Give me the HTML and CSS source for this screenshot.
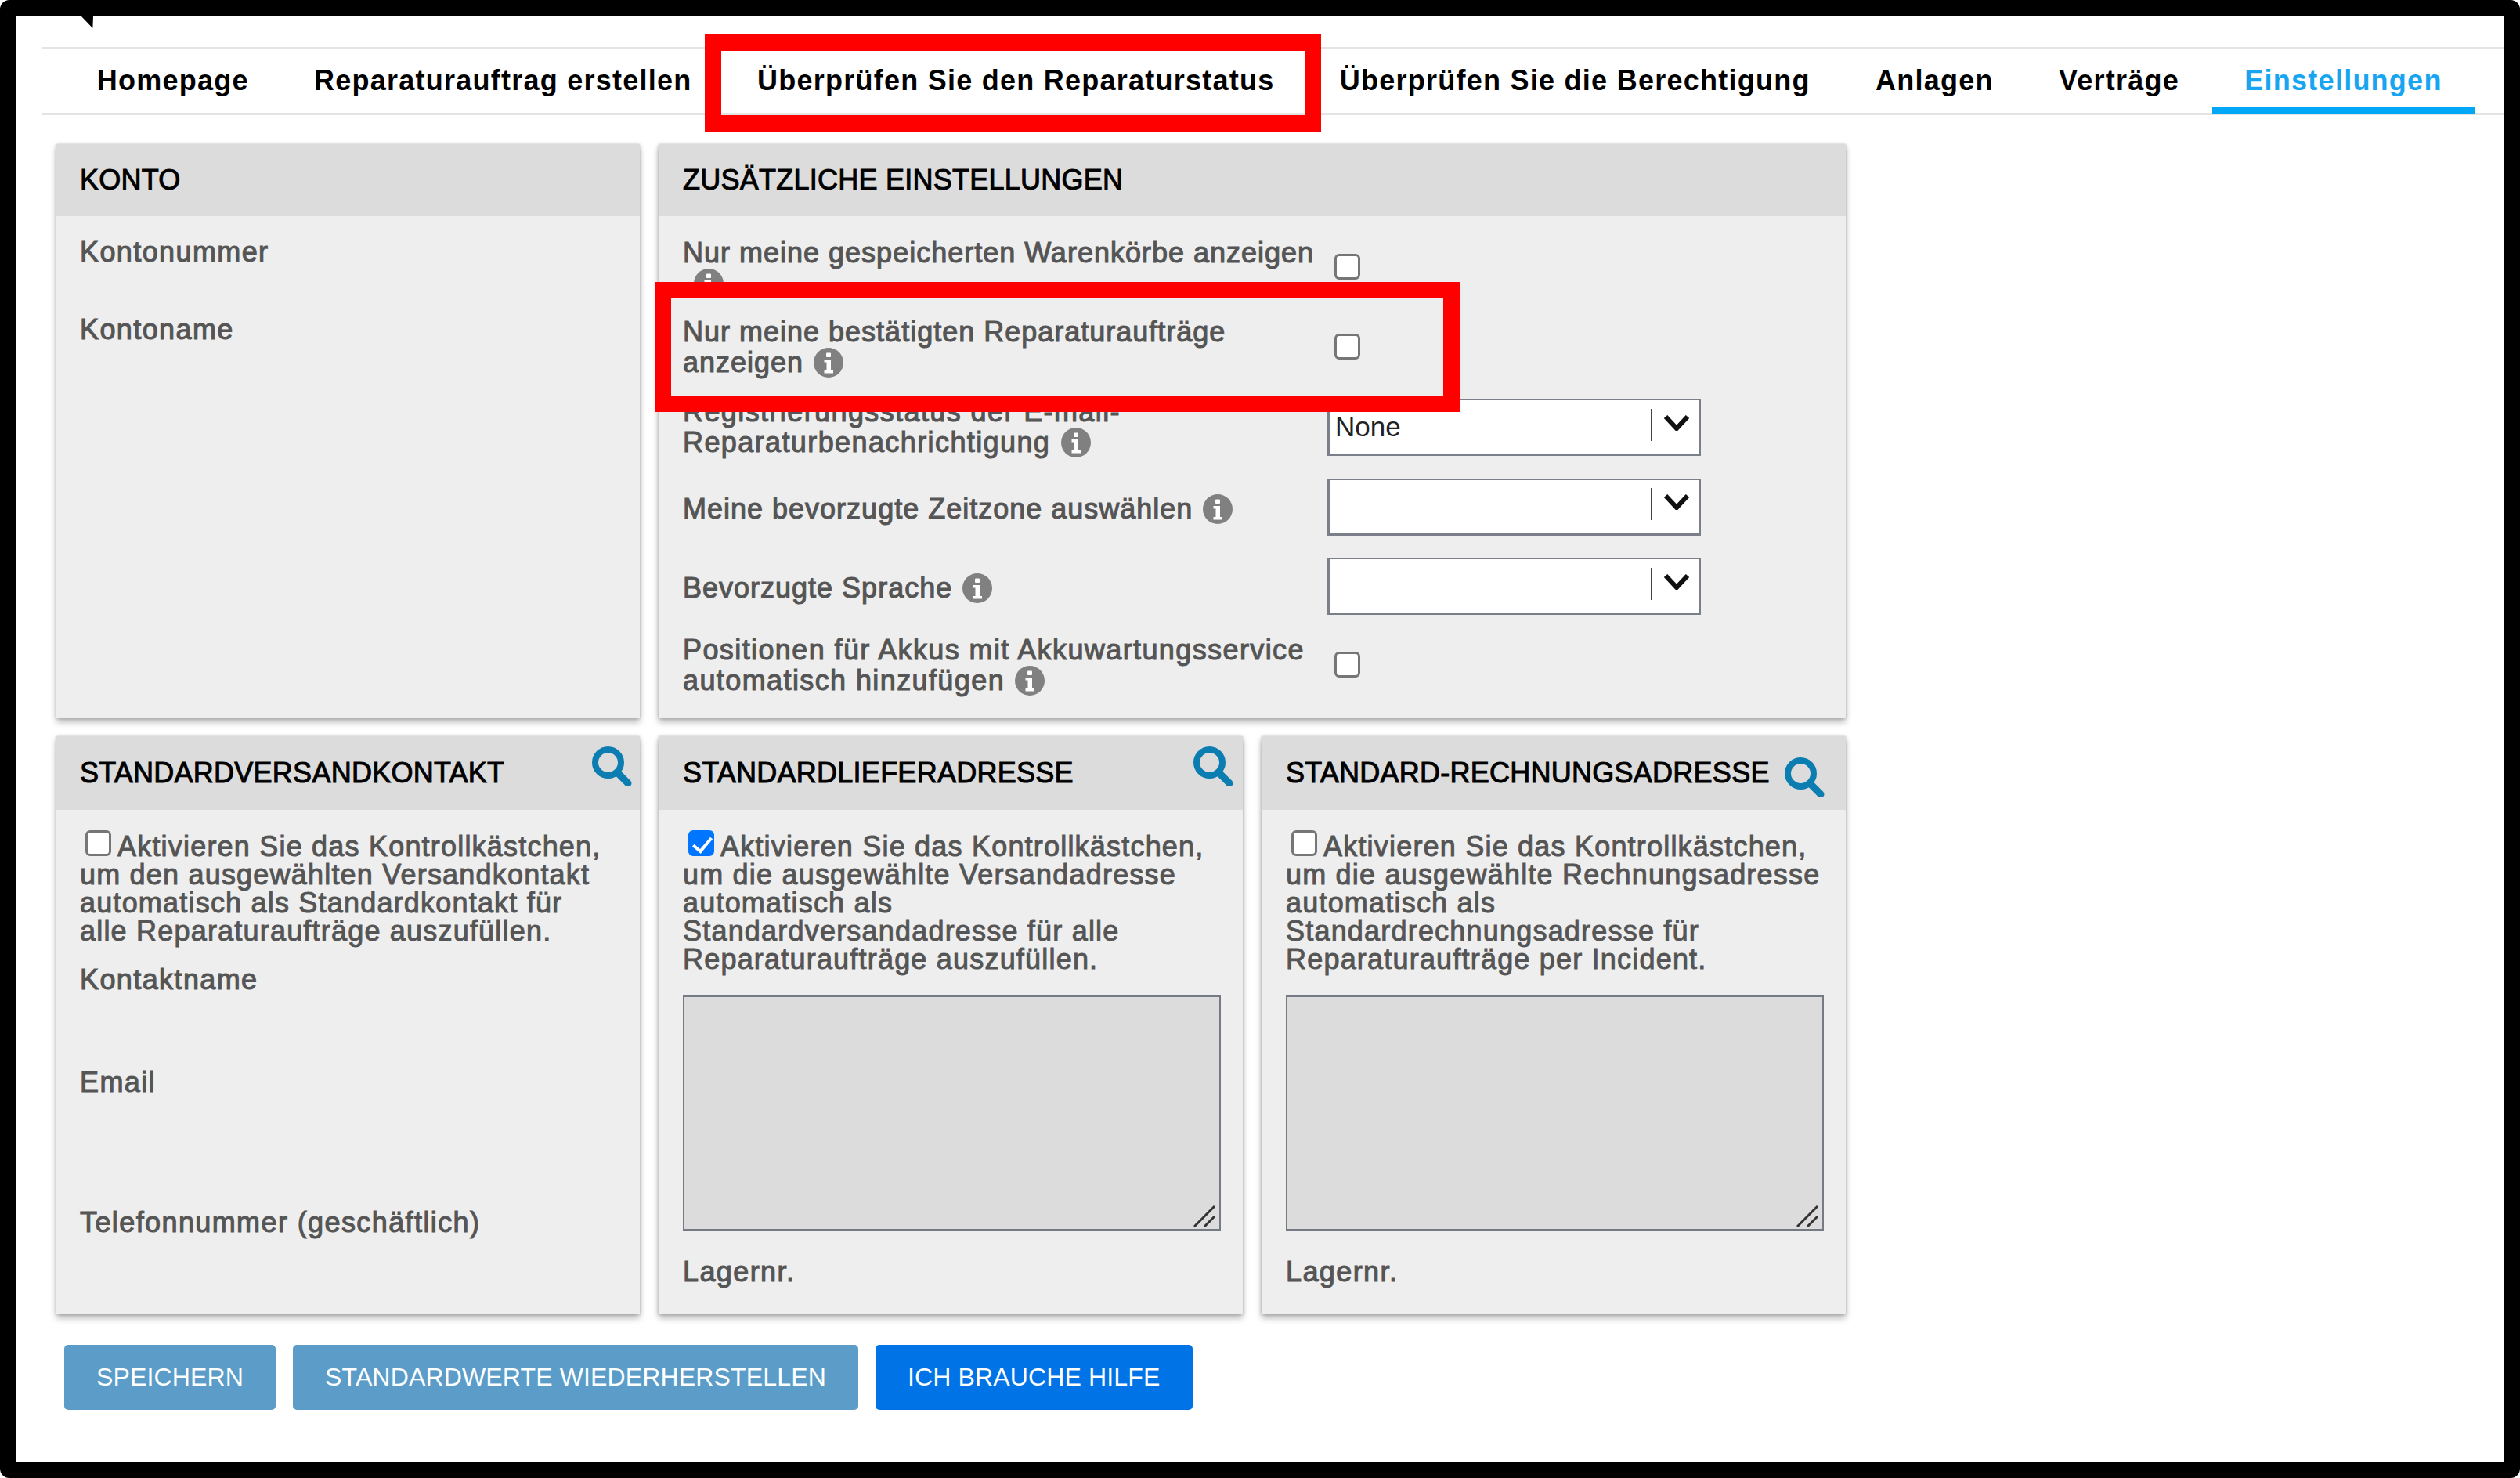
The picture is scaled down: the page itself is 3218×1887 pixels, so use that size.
FILE: index.html
```html
<!DOCTYPE html>
<html lang="de">
<head>
<meta charset="utf-8">
<title>Einstellungen</title>
<link rel="stylesheet" href="styles.css">
</head>
<body>
<svg class="defs" width="0" height="0" aria-hidden="true">
  <symbol id="info" viewBox="0 0 38 38">
    <circle cx="19" cy="19" r="19" fill="#808080"/>
    <rect x="16" y="6.5" width="6" height="5.5" rx="1" fill="#fff"/>
    <path d="M13.5 15h8.5v14h3v3.5H13.5V29h3V18.500h-3z" fill="#fff"/>
  </symbol>
  <symbol id="search" viewBox="0 0 52 52">
    <circle cx="21.500" cy="21.500" r="16.500" fill="none" stroke="#0b7db1" stroke-width="8"/>
    <path d="M33 34l14 14" stroke="#0b7db1" stroke-width="9" stroke-linecap="round"/>
  </symbol>
  <symbol id="chev" viewBox="0 0 34 20">
    <path d="M3 2l14 15L31 2" fill="none" stroke="#111" stroke-width="6"/>
  </symbol>
  <symbol id="grip" viewBox="0 0 28 28">
    <path d="M27 1L1 27M27 14L14 27" stroke="#333" stroke-width="3" fill="none"/>
  </symbol>
</svg>

<div class="screen">
  <div class="notch"></div>

  <nav class="tabs">
    <a class="tab">Homepage</a>
    <a class="tab">Reparaturauftrag erstellen</a>
    <a class="tab">Überprüfen Sie den Reparaturstatus</a>
    <a class="tab">Überprüfen Sie die Berechtigung</a>
    <a class="tab">Anlagen</a>
    <a class="tab">Verträge</a>
    <a class="tab tab-active">Einstellungen</a>
  </nav>

  <main class="content">
    <div class="panels">
      <section class="panel">
        <header class="panel-head panel-head-top"><h2>KONTO</h2></header>
        <div class="panel-body konto">
          <div class="label">Kontonummer</div>
          <div class="label konto-name">Kontoname</div>
        </div>
      </section>

      <section class="panel panel-wide panel-inset">
        <header class="panel-head panel-head-top"><h2>ZUSÄTZLICHE EINSTELLUNGEN</h2></header>
        <div class="panel-body settings">
          <div class="label setting-label">Nur meine gespeicherten Warenkörbe anzeigen <svg class="info info-wrapped"><use href="#info"/></svg></div>
          <div class="setting-control"><input type="checkbox" class="check"></div>

          <div class="label setting-label">Nur meine bestätigten Reparaturaufträge anzeigen <svg class="info"><use href="#info"/></svg></div>
          <div class="setting-control"><input type="checkbox" class="check"></div>

          <div class="label setting-label setting-label-wide">Registrierungsstatus der E-mail-Reparaturbenachrichtigung <svg class="info"><use href="#info"/></svg></div>
          <div class="setting-control">
            <div class="select"><span class="select-value">None</span><span class="select-sep"></span><svg class="chev"><use href="#chev"/></svg></div>
          </div>

          <div class="label setting-label setting-label-single">Meine bevorzugte Zeitzone auswählen <svg class="info"><use href="#info"/></svg></div>
          <div class="setting-control">
            <div class="select"><span class="select-value"></span><span class="select-sep"></span><svg class="chev"><use href="#chev"/></svg></div>
          </div>

          <div class="label setting-label setting-label-single">Bevorzugte Sprache <svg class="info"><use href="#info"/></svg></div>
          <div class="setting-control">
            <div class="select"><span class="select-value"></span><span class="select-sep"></span><svg class="chev"><use href="#chev"/></svg></div>
          </div>

          <div class="label setting-label setting-label-wide">Positionen für Akkus mit Akkuwartungsservice automatisch hinzufügen <svg class="info"><use href="#info"/></svg></div>
          <div class="setting-control"><input type="checkbox" class="check"></div>
        </div>
      </section>

      <section class="panel">
        <header class="panel-head"><h2>STANDARDVERSANDKONTAKT</h2><svg class="search search-a"><use href="#search"/></svg></header>
        <div class="panel-body address">
          <p class="note"><input type="checkbox" class="check check-inline">Aktivieren Sie das Kontrollkästchen, um den ausgewählten Versandkontakt automatisch als Standardkontakt für alle Reparaturaufträge auszufüllen.</p>
          <div class="label contact-name">Kontaktname</div>
          <div class="label contact-mail">Email</div>
          <div class="label contact-phone">Telefonnummer (geschäftlich)</div>
        </div>
      </section>

      <section class="panel panel-inset">
        <header class="panel-head"><h2>STANDARDLIEFERADRESSE</h2><svg class="search search-b"><use href="#search"/></svg></header>
        <div class="panel-body address">
          <p class="note"><input type="checkbox" class="check check-inline" checked>Aktivieren Sie das Kontrollkästchen, um die ausgewählte Versandadresse automatisch als Standardversandadresse für alle Reparaturaufträge auszufüllen.</p>
          <div class="box-wrap"><textarea class="box" disabled></textarea><svg class="grip"><use href="#grip"/></svg></div>
          <div class="label stock">Lagernr.</div>
        </div>
      </section>

      <section class="panel panel-inset">
        <header class="panel-head"><h2>STANDARD-RECHNUNGSADRESSE</h2><svg class="search search-c"><use href="#search"/></svg></header>
        <div class="panel-body address">
          <p class="note"><input type="checkbox" class="check check-inline">Aktivieren Sie das Kontrollkästchen, um die ausgewählte Rechnungsadresse automatisch als Standardrechnungsadresse für Reparaturaufträge per Incident.</p>
          <div class="box-wrap"><textarea class="box" disabled></textarea><svg class="grip"><use href="#grip"/></svg></div>
          <div class="label stock">Lagernr.</div>
        </div>
      </section>
    </div>

    <div class="actions">
      <button class="btn">SPEICHERN</button>
      <button class="btn">STANDARDWERTE WIEDERHERSTELLEN</button>
      <button class="btn btn-primary">ICH BRAUCHE HILFE</button>
    </div>
  </main>

  <div class="mark mark-tab"></div>
  <div class="mark mark-row"></div>
</div>
</body>
</html>
```

FILE: styles.css
```css
* { box-sizing: border-box; }

html, body {
  margin: 0;
  height: 100%;
  background: #fff;
}

body {
  font-family: "Liberation Sans", Arial, sans-serif;
}

.defs { position: absolute; }

.screen {
  position: relative;
  width: 3218px;
  height: 1887px;
  border: 21px solid #000;
  border-radius: 12px;
  background: #fff;
  overflow: hidden;
}

.notch {
  position: absolute;
  left: 83px;
  top: 0;
  width: 15px;
  height: 15px;
  background: #000;
  clip-path: polygon(0 0, 100% 0, 96% 100%);
}

/* tabs */
.tabs {
  display: flex;
  margin: 39px 0 0 33px;
  padding-left: 28px;
  height: 87px;
  border-top: 3px solid #e4e4e4;
  border-bottom: 3px solid #e4e4e4;
}

.tab {
  display: flex;
  align-items: center;
  padding: 6px 41.65px 0;
  font-size: 36px;
  font-weight: 700;
  letter-spacing: 1.25px;
  color: #000;
  white-space: nowrap;
  border-bottom: 9px solid transparent;
  margin-bottom: -1px;
}

.tab-active {
  color: #17a5f2;
  border-bottom-color: #00a7f7;
}

/* panels */
.content {
  padding: 37px 0 0 51px;
}

.panels {
  display: grid;
  grid-template-columns: 745px 746px 746px;
  grid-template-rows: 733px 738px;
  column-gap: 24px;
  row-gap: 23px;
}

.panel {
  background: #eee;
  box-shadow: 0 5px 8px rgba(0, 0, 0, .28), 0 0 4px rgba(0, 0, 0, .22);
}

.panel-wide { grid-column: span 2; }

.panel-head {
  display: flex;
  align-items: center;
  height: 94px;
  padding-left: 30px;
  background: #dcdcdc;
}

.panel-head-top { height: 92px; }

.panel-head h2 {
  margin: 0;
  font-size: 36px;
  font-weight: 400;
  letter-spacing: .25px;
  color: #000;
  -webkit-text-stroke: 1px #000;
  white-space: nowrap;
}

.search {
  width: 52px;
  height: 52px;
  margin-left: auto;
}

.search-a { margin: -18px 10px 0 auto; }
.search-b { margin: -18px 12px 0 auto; }
.search-c { margin: 10px 27px 0 auto; }

.panel-body { padding-left: 30px; }

.panel-inset .panel-head,
.panel-inset .panel-body { padding-left: 31px; }

.label {
  font-size: 36px;
  line-height: 39px;
  letter-spacing: 1.4px;
  color: #555;
  -webkit-text-stroke: 1.1px #555;
}

/* account */
.konto { padding-top: 26px; }
.konto-name { margin-top: 60px; }

/* additional settings */
.settings {
  display: grid;
  grid-template-columns: 826px 1fr;
  grid-auto-rows: 101.5px;
  align-items: center;
  padding-top: 14px;
}

.setting-label {
  padding: 2px 4px 0 0;
  letter-spacing: 1px;
}

.setting-label-wide { letter-spacing: 1.4px; }
.setting-label-single { padding-top: 8px; }

.info {
  width: 38px;
  height: 38px;
  margin-left: 2px;
  vertical-align: -7px;
}

.info-wrapped { margin-left: 14px; }

.setting-control { display: flex; align-items: center; }

.check {
  appearance: none;
  position: relative;
  width: 33px;
  height: 33px;
  margin: 0 0 0 6px;
  border: 3px solid #767676;
  border-radius: 6px;
  background: #fff;
}

.check:checked {
  border-color: #0075ff;
  background: #0075ff;
}

.check:checked::after {
  content: "";
  position: absolute;
  left: 8px;
  top: 1px;
  width: 10px;
  height: 20px;
  border: solid #fff;
  border-width: 0 4px 4px 0;
  transform: rotate(40deg);
}

.select {
  display: flex;
  align-items: center;
  width: 477px;
  height: 73px;
  margin: 4px 0 0 -3px;
  border: 3px solid #7b7f8a;
  border-top-width: 2px;
  background: #fff;
}

.select-value {
  flex: 1;
  padding-left: 7px;
  font-size: 35px;
  color: #222;
}

.select-sep {
  width: 2px;
  height: 41px;
  margin: -6px 14px 0 0;
  background: #444;
}

.chev {
  width: 34px;
  height: 20px;
  margin: -11px 11px 0 0;
}

/* address panels */
.address { padding-top: 26px; }

.note {
  margin: 0;
  padding-right: 30px;
  font-size: 36px;
  line-height: 36px;
  letter-spacing: 1.2px;
  color: #555;
  -webkit-text-stroke: 1px #555;
}

.check-inline {
  margin: 0 8px 0 7px;
  vertical-align: 0;
}

.contact-name { margin-top: 24px; }
.contact-mail { margin-top: 92px; }
.contact-phone { margin-top: 140px; }

.box-wrap {
  position: relative;
  width: 687px;
  height: 302px;
  margin-top: 27px;
}

.box {
  display: block;
  width: 100%;
  height: 100%;
  resize: none;
  background: #dcdcdc;
  border: 2px solid #767a85;
  border-top-width: 3px;
  border-bottom-width: 3px;
  border-radius: 0;
}

.grip {
  position: absolute;
  right: 7px;
  bottom: 5px;
  width: 28px;
  height: 28px;
}

.stock { margin-top: 32px; }

/* buttons */
.actions {
  display: flex;
  gap: 22px;
  margin: 39px 0 0 10px;
}

.btn {
  height: 83px;
  padding: 0 41px;
  border: 0;
  border-radius: 5px;
  background: #5b9dc8;
  color: #fff;
  font-family: inherit;
  font-size: 32px;
  letter-spacing: .15px;
}

.btn-primary { background: #0073e6; }

/* red annotation frames */
.mark {
  position: absolute;
  border: 21px solid #f00;
}

.mark-tab {
  left: 879px;
  top: 23px;
  width: 787px;
  height: 124px;
}

.mark-row {
  left: 815px;
  top: 339px;
  width: 1028px;
  height: 166px;
}
```
